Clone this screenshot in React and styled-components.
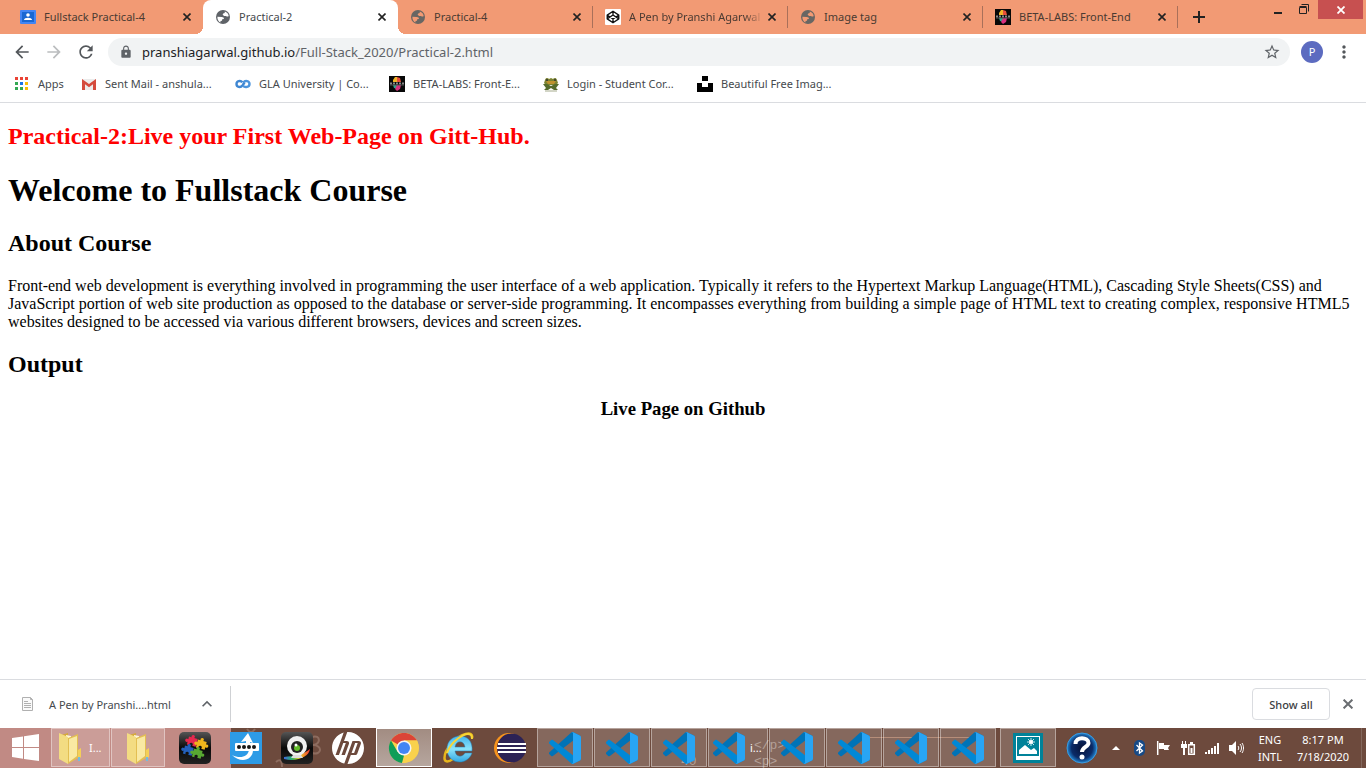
import React from 'react';
import styled, { createGlobalStyle, css } from 'styled-components';
import {
  MdArrowBack, MdArrowForward, MdRefresh, MdLock,
  MdStarBorder, MdMoreVert, MdKeyboardArrowUp,
} from 'react-icons/md';
import { SiHp } from 'react-icons/si';

const ui = '"Noto Sans", "Open Sans", sans-serif';

const GlobalStyle = createGlobalStyle`
  *, *::before, *::after { box-sizing: border-box; }
  body { margin: 0; background: #fff; font-family: ${ui}; font-size: 11px; }
  button { border: 0; padding: 0; background: none; font: inherit; color: inherit; cursor: pointer; }
  svg { display: block; flex: none; }
`;

const Screen = styled.div`
  display: flex;
  flex-direction: column;
  min-height: 100vh;
`;

/* ---------- tab strip ---------- */

const TabStrip = styled.div`
  display: flex;
  height: 34px;
  padding-left: 8px;
  background: #f29a74;
`;

const TabList = styled.div`
  display: flex;
  flex: 0 1 1170px;
  min-width: 0;
`;

const foot = css`
  content: '';
  position: absolute;
  bottom: 0;
  width: 8px;
  height: 8px;
`;

const Tab = styled.div`
  position: relative;
  display: flex;
  flex: 1;
  align-items: center;
  min-width: 0;
  padding: 0 7px 0 12px;
  color: #4a3a32;
  border-right: 1px solid transparent;
  ${(p) => p.$divided && css`
    border-image: linear-gradient(transparent 7px, #a9705a 7px, #a9705a 27px, transparent 27px) 1;
    border-width: 0 1px 0 0;
  `}
  ${(p) => p.$active && css`
    background: #fff;
    color: #45494d;
    border-radius: 8px 8px 0 0;
    &::before {
      ${foot}
      left: -8px;
      background: radial-gradient(circle at 0 0, transparent 8px, #fff 8px);
    }
    &::after {
      ${foot}
      right: -9px;
      background: radial-gradient(circle at 100% 0, transparent 8px, #fff 8px);
    }
  `}
`;

const TabTitle = styled.span`
  flex: 1;
  min-width: 0;
  margin-left: 8px;
  overflow: hidden;
  white-space: nowrap;
  line-height: 18px;
  ${(p) => p.$fade && css`mask-image: linear-gradient(to right, #000 85%, transparent);`}
`;

const TabClose = styled.button`
  display: grid;
  place-items: center;
  width: 16px;
  height: 16px;
  color: #222;
`;

const NewTab = styled.button`
  display: grid;
  place-items: center;
  width: 28px;
  margin-left: 7px;
  color: #222;
`;

const WindowControls = styled.div`
  display: flex;
  align-items: flex-start;
  margin-left: auto;
  padding-right: 3px;
`;

const WindowButton = styled.button`
  display: grid;
  place-items: center;
  width: 27px;
  height: 19px;
  ${(p) => p.$close && css`
    width: 45px;
    background: #c75050;
  `}
`;

/* ---------- toolbar ---------- */

const Toolbar = styled.div`
  display: flex;
  align-items: center;
  height: 36px;
  padding: 0 7px 0 6px;
`;

const ToolButton = styled.button`
  display: grid;
  place-items: center;
  width: 32px;
  height: 28px;
  color: ${(p) => (p.$dim ? '#bbbdbf' : '#53575b')};
`;

const AddressBar = styled.form`
  display: flex;
  flex: 1;
  align-items: center;
  height: 28px;
  margin-left: 6px;
  padding: 0 9px 0 11px;
  border-radius: 14px;
  background: #f1f3f4;
  color: #5f6368;
`;

const Address = styled.div`
  flex: 1;
  margin-left: 9px;
  font-size: 13px;
  line-height: 20px;
  outline: none;
`;

const Host = styled.span`
  color: #202124;
`;

const Avatar = styled.button`
  width: 22px;
  height: 22px;
  margin: 0 6px 0 11px;
  border-radius: 50%;
  background: #5c6bc0;
  color: #fff;
  line-height: 22px;
`;

const MenuButton = styled(ToolButton)`
  width: 30px;
`;

const Bookmarks = styled.nav`
  display: flex;
  height: 33px;
  padding: 0 14px 5px;
  border-bottom: 1px solid #dadce0;
`;

const Bookmark = styled.a`
  display: flex;
  align-items: center;
  flex: none;
  gap: 8px;
  width: ${(p) => p.$width}px;
  color: #45494d;
  line-height: 16px;
  white-space: nowrap;
  text-decoration: none;
`;

/* ---------- document ---------- */

const Document = styled.main`
  flex: 1;
  padding: 20px 8px;
  color: #000;
  font-family: "Liberation Serif", serif;
  font-size: 16px;
  line-height: 18px;
`;

const Title = styled.h1`
  margin: 22px 0;
  font-size: 32px;
  line-height: 36px;
`;

const Heading = styled.h2`
  margin: ${(p) => (p.$first ? '0 0 22px' : '20px 0')};
  color: ${(p) => (p.$first ? '#f00' : '#000')};
  font-size: 24px;
  line-height: 27px;
`;

const Text = styled.p`
  margin: 20px 0;
`;

const Caption = styled.h3`
  margin: 20px 0;
  font-size: 1.17em;
  line-height: 22px;
  text-align: center;
`;

/* ---------- downloads ---------- */

const Downloads = styled.div`
  display: flex;
  align-items: center;
  height: 49px;
  padding-right: 8px;
  border-top: 1px solid #dadce0;
`;

const Download = styled.div`
  display: flex;
  align-items: center;
  width: 231px;
  height: 36px;
  padding-left: 20px;
  border-right: 1px solid #cfd1d4;
  color: #45494d;
`;

const FileName = styled.button`
  display: flex;
  align-items: center;
  gap: 13px;
  width: 177px;
  white-space: nowrap;
`;

const MoreButton = styled.button`
  color: #5f6368;
`;

const ShowAll = styled.button`
  width: 78px;
  height: 32px;
  margin-left: auto;
  border: 1px solid #dadce0;
  border-radius: 4px;
  color: #3c4043;
  font-weight: 500;
`;

const CloseShelf = styled.button`
  display: grid;
  place-items: center;
  width: 20px;
  height: 20px;
  margin-left: 8px;
  color: #6a6d71;
`;

/* ---------- taskbar ---------- */

const Taskbar = styled.footer`
  position: relative;
  display: flex;
  height: 40px;
  overflow: hidden;
  background: linear-gradient(to right, #c18a84 231px, #6d4a3d 231px);
`;

const Wallpaper = styled.svg`
  position: absolute;
  inset: 0;
`;

const Slot = styled.button`
  position: relative;
  display: grid;
  place-items: center;
  flex: none;
  width: ${(p) => p.$width || 51}px;
`;

const Pinned = styled.div`
  display: flex;
  margin-left: 3px;
`;

const Group = styled.div`
  display: flex;
  flex: 0 1 ${(p) => p.$width}px;
  margin-left: ${(p) => p.$gap}px;
`;

const Running = styled.button`
  position: relative;
  display: flex;
  align-items: center;
  justify-content: ${(p) => (p.$labelled ? 'flex-start' : 'center')};
  gap: 5px;
  flex: 1 1 0;
  min-width: 0;
  height: 39px;
  margin-right: 1px;
  padding-left: ${(p) => (p.$labelled ? '4px' : '0')};
  border: 1px solid ${(p) => (p.$active ? '#fff' : '#ffffff66')};
  background: ${(p) => (p.$active ? 'linear-gradient(#a28c82, #b6a69e)' : '#ffffff2b')};
  color: #fff;
`;

const Tray = styled.div`
  position: relative;
  display: flex;
  flex: none;
  margin-left: auto;
  color: #fff;
`;

const Clock = styled.button`
  width: ${(p) => p.$width}px;
  line-height: 17px;
  text-align: center;
  white-space: nowrap;
`;

const ShowDesktop = styled.button`
  width: 5px;
  margin-left: 7px;
  border-left: 1px solid #83675c;
`;

/* ---------- icons ---------- */

const Cross = ({ size = 8 }) => (
  <svg width={size} height={size} viewBox="0 0 8 8" fill="none" stroke="currentColor" strokeWidth="1.600">
    <path d="M.500.500l7 7M7.500.500l-7 7" />
  </svg>
);

const Classroom = () => (
  <svg width="16" height="16" viewBox="0 0 16 16">
    <path fill="#4285f4" d="M1 1h14a1 1 0 0 1 1 1v12a1 1 0 0 1-1 1H1a1 1 0 0 1-1-1V2a1 1 0 0 1 1-1z" />
    <path fill="#1967d2" d="M2 3h12v10H2z" />
    <circle cx="8" cy="6" r="1.800" fill="#fff" />
    <path fill="#fff" d="M4 11c0-3 8-3 8 0z" />
  </svg>
);

const Globe = ({ faded }) => (
  <svg width="16" height="16" viewBox="0 0 16 16">
    <circle cx="8" cy="8" r="7" fill={faded ? '#686663' : '#5f6368'} />
    <path
      fill={faded ? '#f29a74' : '#fff'}
      d="M2.400 7.800l4.300.100c1.700 0 2.400.800 2.200 2.200l-1.700.200-.200 1.400-1.500.300v1.600C3.500 12.700 2.200 10.500 2.400 7.800zM9.800 2.600c2 .600 3.500 2.200 3.900 4.300-.700.900-2 .800-2.600.1L9 6.900 7.600 5.600l.600-1.200 1.500-.300z"
    />
  </svg>
);

const Pen = () => (
  <svg width="16" height="16" viewBox="0 0 16 16">
    <rect width="16" height="16" rx="1" fill="#fff" />
    <path
      fill="none"
      stroke="#111"
      strokeWidth="1.300"
      strokeLinejoin="round"
      d="M8 2.200l5.800 3.900v3.800L8 13.800 2.200 9.900V6.100zM8 2.200V6M8 10v3.800M2.200 6.100L8 10l5.800-3.900M2.200 9.900L8 6l5.800 3.900"
    />
  </svg>
);

const BetaLabs = () => (
  <svg width="16" height="16" viewBox="0 0 16 16">
    <path fill="#080808" d="M0 0h16v16H0z" />
    <path fill="#f0b429" d="M4 4l2-3h2v5H4z" />
    <path fill="#e8503a" d="M8 1l3 1 1 4H8z" />
    <path fill="#2ca58d" d="M4 9h4v4l-3-1z" />
    <path fill="#d8307f" d="M8 9h4l-1 4-3 2-2-2z" />
    <path stroke="#888" strokeWidth="2" strokeDasharray="2 1" d="M1 7.500h14" />
    <path stroke="#555" d="M1 9h14" />
  </svg>
);

const appFills = ['#ea4335', '#ea4335', '#ea4335', '#34a853', '#1a73e8', '#fbbc04', '#34a853', '#34a853', '#fbbc04'];

const AppsGrid = () => (
  <svg width="16" height="16" viewBox="0 0 16 16">
    {appFills.map((f, i) => (
      <rect key={i} x={1 + (i % 3) * 5} y={1 + Math.floor(i / 3) * 5} width="3" height="3" fill={f} />
    ))}
  </svg>
);

const Gmail = () => (
  <svg width="16" height="16" viewBox="0 0 16 16">
    <path fill="#ececec" d="M1 3h14v11H1z" />
    <path fill="#d54b3d" d="M1 3l7 5 7-5v11h-3V8.300l-4 3-4-3V14H1z" />
  </svg>
);

const Loops = () => (
  <svg width="16" height="16" viewBox="0 0 16 16" fill="none" strokeWidth="2.400">
    <path stroke="#3f87d2" d="M7.500 6.200C5.500 4 1.500 4.800 1.500 8s4 4 6 1.500l2-3" />
    <path stroke="#4b94dc" d="M8 9.800c2 2.200 6.500 1.400 6.500-1.800s-4.500-4-6-1.500" />
  </svg>
);

const Frog = () => (
  <svg width="16" height="16" viewBox="0 0 16 16">
    <path fill="#7c8431" d="M2 4c1-3 3-2 4-1l2-1 2 1c1-1 3-2 4 1l1 3-2 2H3L1 7z" />
    <path fill="#c0922f" d="M3 5h10l-2 3H5z" />
    <path fill="#556b2c" d="M0 8h4l4 2 4-2h4l-3 4 2 2h-4l-3-2-3 2H1l2-2z" />
    <path stroke="#a6ab8d" d="M2 15h12" />
    <circle cx="4" cy="4" r="1" fill="#333" />
    <circle cx="12" cy="4" r="1" fill="#333" />
  </svg>
);

const Unsplash = () => (
  <svg width="16" height="16" viewBox="0 0 16 16">
    <path d="M5 0h6v5H5zM0 7h5v4h6V7h5v9H0z" />
  </svg>
);

const Windows = () => (
  <svg width="28" height="28" viewBox="0 0 28 28" fill="#fff">
    <path d="M0 4l11-1.600V13H0zM12 2.200L27 0v13H12zM0 14h11v10.800L0 23zM12 14h15v13l-15-2z" />
  </svg>
);

const Folder = () => (
  <svg width="28" height="32" viewBox="0 0 28 32">
    <path fill="#d6a93b" d="M5 3l7-2v23l-7 4z" />
    <path fill="#fff8d8" d="M10 3l5 1v22l-4 2z" />
    <path fill="#f3dc82" d="M3 1l9 4v27l-9-5z" />
    <path fill="#e3bf52" d="M12 6l10-4v24l-10 6z" />
    <path fill="#f9e9a3" d="M13 7l8-3v20l-8 6z" />
    <path fill="#f4cf58" d="M22 18l3-2v9l-3 3z" />
    <path fill="#72bde0" d="M22 25h2v4h-2z" />
  </svg>
);

const piece = 'M0 2h3c-2-4 5-4 3 0h4v3c4-2 4 5 0 3v3H6c2-4-5-4-3 0H0V8c-4 2-4-5 0-3z';

const Puzzle = () => (
  <svg width="32" height="32" viewBox="0 0 32 32">
    <defs>
      <linearGradient id="gloss" x2="0" y2="1">
        <stop stopColor="#555" /><stop offset=".5" stopColor="#090909" /><stop offset="1" stopColor="#222" />
      </linearGradient>
    </defs>
    <rect width="32" height="32" rx="5" fill="url(#gloss)" />
    <path fill="#e6294f" d={piece} transform="translate(9 4) rotate(15 5 5) scale(.900)" />
    <path fill="#f0b51c" d={piece} transform="translate(18 7) rotate(15 5 5) scale(.900)" />
    <path fill="#2460bc" d={piece} transform="translate(5 13) rotate(15 5 5) scale(.900)" />
    <path fill="#58a832" d={piece} transform="translate(14 16) rotate(15 5 5) scale(.900)" />
  </svg>
);

const Password = () => (
  <svg width="32" height="32" viewBox="0 0 32 32">
    <path fill="#2d9be6" d="M0 0h32v32H0z" />
    <path fill="#fff" d="M11 10l7-9 5 10-3-1v4h-4V9zM19 18h4c0 10-12 14-21 5 8 4 16 2 17-5z" />
    <rect x="5" y="11" width="24" height="8" rx="1" fill="#fff" />
    <g fill="#181818"><circle cx="9" cy="15" r="2" /><circle cx="14" cy="15" r="2" /><circle cx="19" cy="15" r="2" /><circle cx="24" cy="15" r="2" /></g>
  </svg>
);

const Webcam = () => (
  <svg width="32" height="32" viewBox="0 0 32 32">
    <defs>
      <linearGradient id="rainbow">
        <stop stopColor="#4169e1" /><stop offset=".3" stopColor="#28b36c" /><stop offset=".6" stopColor="#f2d324" /><stop offset="1" stopColor="#e33" />
      </linearGradient>
    </defs>
    <rect width="32" height="32" rx="5" fill="url(#gloss)" />
    <path fill="url(#rainbow)" d="M3 25c10-1 19-2 26-8-1 8-13 13-26 10z" />
    <circle cx="16" cy="14" r="10" fill="#f1f1f1" />
    <circle cx="16" cy="15" r="6" fill="#222" />
    <circle cx="16" cy="16" r="3" fill="#62bd2b" />
    <circle cx="15" cy="13" r="1.500" fill="#fff" />
    <path fill="#ddd" d="M12 23h8l2 3H10z" />
  </svg>
);

const Chrome = () => (
  <svg width="32" height="32" viewBox="0 0 32 32">
    <circle cx="16" cy="16" r="15" fill="#f9d14c" />
    <path fill="#db4437" d="M16 16L3 8.500C9-1.500 23-1.500 29 8.500H16z" />
    <path fill="#0f9d58" d="M3 8.500l6.500 11.200L16 23.500l-2 7.400C2 29-2 17 3 8.500z" />
    <path fill="#f9d14c" d="M16 8.500h13C34 20 26 31 14 31l8.500-11.200z" />
    <circle cx="16" cy="16" r="7.500" fill="#f4f4f4" />
    <circle cx="16" cy="16" r="6" fill="#4285f4" />
  </svg>
);

const Explorer = () => (
  <svg width="32" height="32" viewBox="0 0 32 32">
    <defs>
      <linearGradient id="ie" x2="0" y2="1">
        <stop stopColor="#43b4ee" /><stop offset=".5" stopColor="#8be3fb" /><stop offset="1" stopColor="#32a7e2" />
      </linearGradient>
    </defs>
    <path fill="none" stroke="#e8b61d" strokeWidth="2.500" d="M10 27C-2 35 0 21 8 12 17 1 31-2 29 6" />
    <path fill="url(#ie)" stroke="#247fb5" strokeWidth=".500" fillRule="evenodd" d="M17 4c8 0 13 6 12 15H12c1 7 8 6 10 2h7c-5 14-25 11-25-4C4 9 10 4 17 4zm-5 11h10c-1-7-9-7-10 0z" />
    <path fill="none" stroke="#f8d635" strokeWidth="2" d="M4 21C8 9 23-1 28 3c1 1 1 2 1 4" />
  </svg>
);

const Eclipse = () => (
  <svg width="32" height="32" viewBox="0 0 32 32">
    <circle cx="15" cy="16" r="15" fill="#f7941e" />
    <circle cx="17.500" cy="16" r="14.500" fill="#2c2255" />
    <path stroke="#fff" strokeWidth="2" d="M4 12h28M3 16h29M4 20h28" />
  </svg>
);

const Code = () => (
  <svg width="32" height="32" viewBox="0 0 100 100">
    <path fill="#0073b7" d="M96.460 10.800 75.860.880C73.470-.270 70.620.210 68.750 2.080L1.300 63.580c-1.810 1.650-1.810 4.510.010 6.160l5.510 5.010c1.480 1.350 3.720 1.450 5.320.230L93.360 13.370C96.090 11.300 100 13.240 100 16.670v-.240c0-2.400-1.380-4.600-3.540-5.630z" />
    <path fill="#0088d6" d="M96.460 89.200 75.860 99.120c-2.390 1.150-5.240.660-7.110-1.210L1.300 36.420c-1.810-1.650-1.810-4.510.010-6.160l5.510-5.010c1.480-1.350 3.720-1.450 5.320-.230L93.360 86.630C96.090 88.700 100 86.760 100 83.330v.240c0 2.400-1.380 4.600-3.540 5.630z" />
    <path fill="#28a5f4" d="M75.860 99.130c-2.390 1.150-5.240.660-7.110-1.210 2.310 2.310 6.250.670 6.250-2.590V4.670c0-3.260-3.940-4.890-6.250-2.590 1.870-1.870 4.730-2.350 7.110-1.210l20.600 9.910c2.160 1.040 3.540 3.230 3.540 5.630v67.170c0 2.400-1.380 4.590-3.540 5.630z" />
  </svg>
);

const Photos = () => (
  <svg width="30" height="30" viewBox="0 0 30 30">
    <path fill="#008299" d="M0 0h30v30H0z" />
    <path fill="#fff" fillRule="evenodd" d="M3 3h24v24H3zM4 4v19h22V4z" />
    <path fill="#fff" d="M6 21v-4l6-5 6 5 3-2 3 3v3zM3 23h24v4H3z" />
    <circle cx="18" cy="9" r="2" fill="#fff" />
    <path stroke="#fff" strokeWidth=".800" d="M18 5v8M14 9h8M15 6l6 6M21 6l-6 6" />
  </svg>
);

const Help = () => (
  <svg width="32" height="32" viewBox="0 0 32 32">
    <defs>
      <radialGradient id="orb"><stop stopColor="#071238" /><stop offset=".7" stopColor="#0b2b68" /><stop offset="1" stopColor="#2286d2" /></radialGradient>
    </defs>
    <circle cx="16" cy="16" r="15" fill="url(#orb)" stroke="#3a9be0" />
    <path fill="none" stroke="#fff" strokeWidth="4" d="M9.500 12c0-8 13-7 13-1 0 4-6.500 4-6.500 9" />
    <circle cx="16" cy="25" r="2.500" fill="#fff" />
  </svg>
);

const FileIcon = () => (
  <svg width="16" height="16" viewBox="0 0 16 16" fill="none" stroke="#b0b0b0">
    <path fill="#fafafa" d="M2.500 1.500h8l2 2v11h-10zM10.500 1.500v2h2" />
    <path d="M4 5.500h4M4 7.500h7M4 9.500h7M4 11.500h7" />
  </svg>
);

const HpLogo = () => (
  <svg width="32" height="32" viewBox="0 0 32 32">
    <circle cx="16" cy="16" r="15" fill="#6d4a3d" />
    <SiHp size={32} color="#fff" />
  </svg>
);

const trayIcons = {
  'Show hidden icons': <path fill="#fff" d="M4 10l4-4 4 4z" />,
  Bluetooth: (
    <>
      <rect x="2" y="0" width="11" height="16" rx="5" fill="#174a86" />
      <path fill="none" stroke="#fff" strokeWidth="1.300" d="M4.500 5l6 6L7.500 13V3l3 2-6 6" />
    </>
  ),
  'Action center': (
    <>
      <path stroke="#fff" strokeWidth="1.500" d="M1.700 1v14" />
      <path fill="#fff" d="M3 3h5v2h6l-2 3 1 2H8V9H3z" />
    </>
  ),
  Battery: (
    <>
      <path fill="none" stroke="#fff" strokeWidth="1.500" d="M8.700 4.700h5.600v9.600H8.700z" />
      <path fill="#fff" d="M10 2h3v2h-3zM10.500 8h2v5h-2zM1 4h6v4H5v7H3V8H1zM2 1h1v3H2zM5 1h1v3H5z" />
    </>
  ),
  Network: <path fill="#fff" d="M1 12h2v2H1zM4 10h2v4H4zM7 8h2v6H7zM10 6h2v8h-2zM13 3h2v11h-2z" />,
  Volume: (
    <>
      <path fill="#fff" d="M1 5h3l4-4v14l-4-4H1z" />
      <path fill="none" stroke="#fff" d="M10 6c1 1 1 3 0 4M12 4c2 2 2 6 0 8M14 3c2 3 2 7 0 10" />
    </>
  ),
};

/* ---------- data ---------- */

const tabs = [
  { title: 'Fullstack Practical-4', icon: <Classroom /> },
  { title: 'Practical-2', icon: <Globe />, active: true },
  { title: 'Practical-4', icon: <Globe faded />, divided: true },
  { title: 'A Pen by Pranshi Agarwal', icon: <Pen />, divided: true, fade: true },
  { title: 'Image tag', icon: <Globe faded />, divided: true },
  { title: 'BETA-LABS: Front-End', icon: <BetaLabs />, divided: true },
];

const bookmarks = [
  { label: 'Apps', icon: <AppsGrid />, width: 67 },
  { label: 'Sent Mail - anshula...', icon: <Gmail />, width: 154 },
  { label: 'GLA University | Co...', icon: <Loops />, width: 154 },
  { label: 'BETA-LABS: Front-E...', icon: <BetaLabs />, width: 154 },
  { label: 'Login - Student Cor...', icon: <Frog />, width: 154 },
  { label: 'Beautiful Free Imag...', icon: <Unsplash />, width: 154 },
];

const pinned = [
  { name: 'Puzzle', icon: <Puzzle /> },
  { name: 'Password manager', icon: <Password /> },
  { name: 'Webcam', icon: <Webcam /> },
  { name: 'HP', icon: <HpLogo /> },
];

const editors = ['', '', '', 'i...', '', '', '', ''];

export default function App() {
  return (
    <Screen>
      <GlobalStyle />
      <TabStrip>
        <TabList>
          {tabs.map((t) => (
            <Tab key={t.title} $active={t.active} $divided={t.divided}>
              {t.icon}
              <TabTitle $fade={t.fade}>{t.title}</TabTitle>
              <TabClose aria-label={`Close ${t.title}`}><Cross /></TabClose>
            </Tab>
          ))}
        </TabList>
        <NewTab aria-label="New tab">
          <svg width="12" height="12" stroke="currentColor" strokeWidth="2"><path d="M6 0v12M0 6h12" /></svg>
        </NewTab>
        <WindowControls>
          <WindowButton aria-label="Minimize">
            <svg width="10" height="10"><path fill="#222" d="M1 7h8v2H1z" /></svg>
          </WindowButton>
          <WindowButton aria-label="Restore">
            <svg width="11" height="11" fill="none" stroke="#222"><path d="M.500 3.500h7v6h-7zM.500 2.500h7M2.500 .500h7v7" /></svg>
          </WindowButton>
          <WindowButton $close aria-label="Close window">
            <svg width="8" height="8" stroke="#fff" strokeWidth="1.800"><path d="M.500.500l7 7M7.500.500l-7 7" /></svg>
          </WindowButton>
        </WindowControls>
      </TabStrip>

      <Toolbar>
        <ToolButton aria-label="Back"><MdArrowBack size={20} /></ToolButton>
        <ToolButton $dim aria-label="Forward"><MdArrowForward size={20} /></ToolButton>
        <ToolButton aria-label="Reload"><MdRefresh size={20} /></ToolButton>
        <AddressBar>
          <MdLock size={14} />
          <Address role="textbox" aria-label="Address" contentEditable suppressContentEditableWarning spellCheck={false}>
            <Host>pranshiagarwal.github.io</Host>/Full-Stack_2020/Practical-2.html
          </Address>
          <MdStarBorder size={18} />
        </AddressBar>
        <Avatar aria-label="Profile">P</Avatar>
        <MenuButton aria-label="Menu"><MdMoreVert size={20} /></MenuButton>
      </Toolbar>

      <Bookmarks aria-label="Bookmarks">
        {bookmarks.map((b) => (
          <Bookmark key={b.label} href="#" $width={b.width}>{b.icon}{b.label}</Bookmark>
        ))}
      </Bookmarks>

      <Document>
        <Heading $first>Practical-2:Live your First Web-Page on Gitt-Hub.</Heading>
        <Title>Welcome to Fullstack Course</Title>
        <Heading>About Course</Heading>
        <Text>
          Front-end web development is everything involved in programming the user interface of a web application.
          Typically it refers to the Hypertext Markup Language(HTML), Cascading Style Sheets(CSS) and JavaScript
          portion of web site production as opposed to the database or server-side programming. It encompasses
          everything from building a simple page of HTML text to creating complex, responsive HTML5 websites
          designed to be accessed via various different browsers, devices and screen sizes.
        </Text>
        <Heading>Output</Heading>
        <Caption>Live Page on Github</Caption>
      </Document>

      <Downloads>
        <Download>
          <FileName><FileIcon />A Pen by Pranshi....html</FileName>
          <MoreButton aria-label="Download options"><MdKeyboardArrowUp size={20} /></MoreButton>
        </Download>
        <ShowAll>Show all</ShowAll>
        <CloseShelf aria-label="Close downloads"><Cross size={10} /></CloseShelf>
      </Downloads>

      <Taskbar>
        <Wallpaper width="1366" height="40" aria-hidden="true">
          <g fontFamily="Liberation Mono, monospace" fontSize="13" fill="#a58e83">
            <text x="754" y="21">&lt;/p&gt;</text>
            <text x="754" y="37">&lt;p&gt;</text>
            <text x="681" y="37">40</text>
          </g>
          <path fill="none" stroke="#8d6c5f" strokeWidth="2" d="M247 1q4 6 8 0M312 9c9-3 9 8 1 8c10 0 9 11-1 8M276 34q6-5 6 5" />
          <path stroke="#a8785f" d="M855 9.500h115" />
        </Wallpaper>
        <Slot aria-label="Start"><Windows /></Slot>
        <Group $width={115} $gap={0}>
          <Running $labelled><Folder />I...</Running>
          <Running aria-label="File Explorer"><Folder /></Running>
        </Group>
        <Pinned>
          {pinned.map((p) => <Slot key={p.name} aria-label={p.name}>{p.icon}</Slot>)}
        </Pinned>
        <Group $width={57} $gap={3}>
          <Running $active aria-label="Chrome"><Chrome /></Running>
        </Group>
        <Slot aria-label="Internet Explorer"><Explorer /></Slot>
        <Slot aria-label="Eclipse"><Eclipse /></Slot>
        <Group $width={460} $gap={2}>
          {editors.map((label, i) => (
            <Running key={i} $labelled={!!label} aria-label={label ? undefined : 'Visual Studio Code'}>
              <Code />{label}
            </Running>
          ))}
        </Group>
        <Group $width={57} $gap={3}>
          <Running aria-label="Photos"><Photos /></Running>
        </Group>
        <Tray>
          <Slot $width={44} aria-label="Help"><Help /></Slot>
          {Object.entries(trayIcons).map(([name, shape]) => (
            <Slot key={name} $width={24} aria-label={name}>
              <svg width="16" height="16" viewBox="0 0 16 16">{shape}</svg>
            </Slot>
          ))}
          <Clock $width={44}>ENG<br />INTL</Clock>
          <Clock $width={62}>8:17 PM<br />7/18/2020</Clock>
          <ShowDesktop aria-label="Show desktop" />
        </Tray>
      </Taskbar>
    </Screen>
  );
}
